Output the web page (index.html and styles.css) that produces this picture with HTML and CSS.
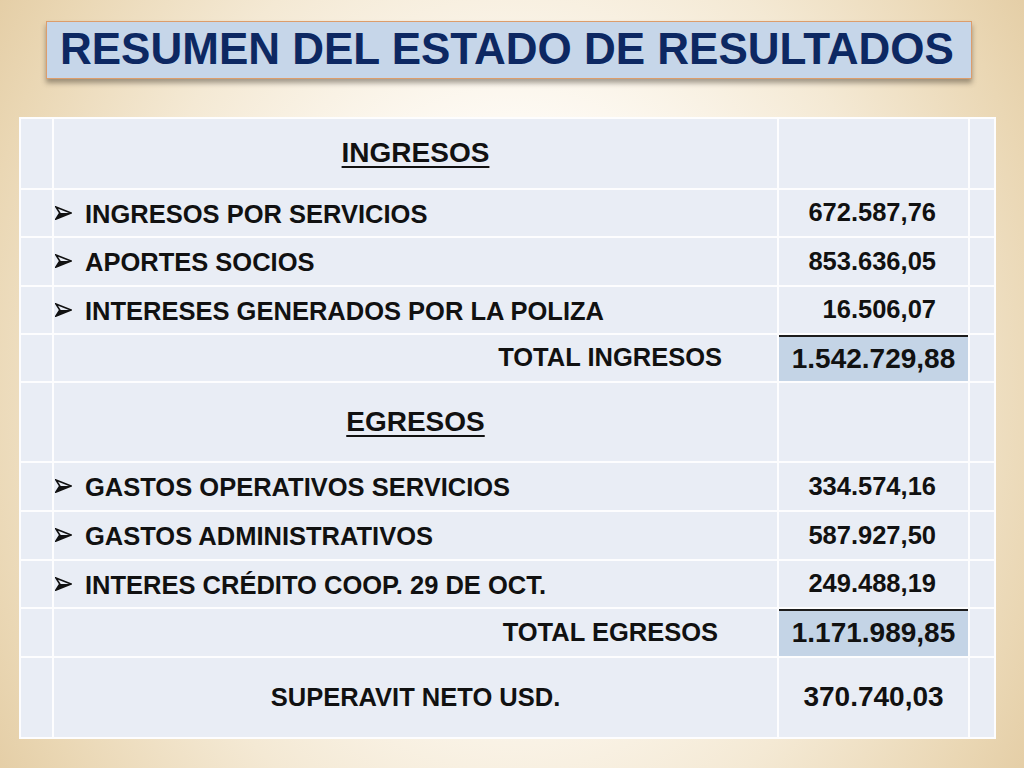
FILE: index.html
```html
<!DOCTYPE html>
<html lang="es">
<head>
<meta charset="utf-8">
<title>Resumen del Estado de Resultados</title>
<link rel="stylesheet" href="styles.css">
</head>
<body>
<main class="slide">
  <header class="title-box">
    <h1 class="title">RESUMEN DEL ESTADO DE RESULTADOS</h1>
  </header>

  <table class="summary">
    <colgroup>
      <col class="c-edge">
      <col class="c-label">
      <col class="c-value">
      <col class="c-tail">
    </colgroup>
    <tbody>
      <tr class="r-head">
        <td></td>
        <td class="section"><span class="section-text">INGRESOS</span></td>
        <td></td>
        <td></td>
      </tr>
      <tr class="r-item">
        <td></td>
        <td class="item"><svg class="bullet" viewBox="0 0 17 14" width="17" height="14" aria-hidden="true"><path d="M0.9 0.9 L16.1 7 L0.9 13.1 L4.8 7 Z" fill="none" stroke="#111" stroke-width="1.6" stroke-linejoin="miter"/><path d="M4.8 7 L16.1 7 L0.9 13.1 Z" fill="#111"/></svg><span>INGRESOS POR SERVICIOS</span></td>
        <td class="value">672.587,76</td>
        <td></td>
      </tr>
      <tr class="r-item2">
        <td></td>
        <td class="item"><svg class="bullet" viewBox="0 0 17 14" width="17" height="14" aria-hidden="true"><path d="M0.9 0.9 L16.1 7 L0.9 13.1 L4.8 7 Z" fill="none" stroke="#111" stroke-width="1.6" stroke-linejoin="miter"/><path d="M4.8 7 L16.1 7 L0.9 13.1 Z" fill="#111"/></svg><span>APORTES SOCIOS</span></td>
        <td class="value">853.636,05</td>
        <td></td>
      </tr>
      <tr class="r-item">
        <td></td>
        <td class="item"><svg class="bullet" viewBox="0 0 17 14" width="17" height="14" aria-hidden="true"><path d="M0.9 0.9 L16.1 7 L0.9 13.1 L4.8 7 Z" fill="none" stroke="#111" stroke-width="1.6" stroke-linejoin="miter"/><path d="M4.8 7 L16.1 7 L0.9 13.1 Z" fill="#111"/></svg><span>INTERESES GENERADOS POR LA POLIZA</span></td>
        <td class="value">16.506,07</td>
        <td></td>
      </tr>
      <tr class="r-total">
        <td></td>
        <td class="total-label">TOTAL INGRESOS</td>
        <td class="total-value">1.542.729,88</td>
        <td></td>
      </tr>
      <tr class="r-section">
        <td></td>
        <td class="section"><span class="section-text">EGRESOS</span></td>
        <td></td>
        <td></td>
      </tr>
      <tr class="r-item2">
        <td></td>
        <td class="item"><svg class="bullet" viewBox="0 0 17 14" width="17" height="14" aria-hidden="true"><path d="M0.9 0.9 L16.1 7 L0.9 13.1 L4.8 7 Z" fill="none" stroke="#111" stroke-width="1.6" stroke-linejoin="miter"/><path d="M4.8 7 L16.1 7 L0.9 13.1 Z" fill="#111"/></svg><span>GASTOS OPERATIVOS SERVICIOS</span></td>
        <td class="value">334.574,16</td>
        <td></td>
      </tr>
      <tr class="r-item2">
        <td></td>
        <td class="item"><svg class="bullet" viewBox="0 0 17 14" width="17" height="14" aria-hidden="true"><path d="M0.9 0.9 L16.1 7 L0.9 13.1 L4.8 7 Z" fill="none" stroke="#111" stroke-width="1.6" stroke-linejoin="miter"/><path d="M4.8 7 L16.1 7 L0.9 13.1 Z" fill="#111"/></svg><span>GASTOS ADMINISTRATIVOS</span></td>
        <td class="value">587.927,50</td>
        <td></td>
      </tr>
      <tr class="r-item">
        <td></td>
        <td class="item"><svg class="bullet" viewBox="0 0 17 14" width="17" height="14" aria-hidden="true"><path d="M0.9 0.9 L16.1 7 L0.9 13.1 L4.8 7 Z" fill="none" stroke="#111" stroke-width="1.6" stroke-linejoin="miter"/><path d="M4.8 7 L16.1 7 L0.9 13.1 Z" fill="#111"/></svg><span>INTERES CRÉDITO COOP. 29 DE OCT.</span></td>
        <td class="value">249.488,19</td>
        <td></td>
      </tr>
      <tr class="r-item2">
        <td></td>
        <td class="total-label total-label-eg">TOTAL EGRESOS</td>
        <td class="total-value">1.171.989,85</td>
        <td></td>
      </tr>
      <tr class="r-net">
        <td></td>
        <td class="net-label">SUPERAVIT NETO USD.</td>
        <td class="net-value">370.740,03</td>
        <td></td>
      </tr>
    </tbody>
  </table>
</main>
</body>
</html>
```

FILE: styles.css
```css
* {
  box-sizing: border-box;
}

html,
body {
  margin: 0;
  padding: 0;
}

body {
  width: 1024px;
  height: 768px;
  overflow: hidden;
  font-family: "Liberation Sans", Arial, sans-serif;
}

.slide {
  width: 1024px;
  height: 768px;
  padding-top: 21px;
  background: radial-gradient(ellipse 62% 100% at 50% 50%, #fffefb 0%, #fdf9f2 35%, #f4e9d4 62%, #ead7b4 85%, #e2caa0 100%);
  display: flex;
  flex-direction: column;
}

.title-box {
  margin-left: 46px;
  width: 926px;
  height: 58px;
  background: #c6d6e9;
  border: 1.5px solid #dc9d6c;
  box-shadow: 0 4px 5px rgba(60, 50, 40, 0.45);
  display: flex;
  align-items: center;
  padding-left: 13px;
  padding-bottom: 1px;
}

.title {
  margin: 0;
  font-size: 44px;
  font-weight: 700;
  line-height: 1.1;
  color: #0d2862;
  white-space: nowrap;
}

.summary {
  margin-top: 38px;
  margin-left: 19px;
  width: 977px;
  table-layout: fixed;
  border-collapse: separate;
  border-spacing: 2px;
  background: #fdfdfe;
  color: #111;
  font-weight: 700;
}

.c-edge { width: 31px; }
.c-label { width: 723px; }
.c-value { width: 189px; }
.c-tail { width: 24px; }

.summary td {
  background: #e9edf5;
  padding: 0;
  vertical-align: middle;
  white-space: nowrap;
  line-height: 1.15;
}

.r-head td { height: 69px; }
.r-item td { height: 46px; }
.r-item2 td { height: 47px; }
.r-total td { height: 46px; }
.r-section td { height: 78px; }
.r-net td { height: 79px; }

.section {
  text-align: center;
  font-size: 28px;
}

.section-text {
  text-decoration: underline;
  text-decoration-thickness: 2px;
  text-underline-offset: 4px;
}

.summary td.item {
  font-size: 25.5px;
  padding-left: 1px;
}

.item span {
  vertical-align: middle;
}

.bullet {
  display: inline-block;
  vertical-align: middle;
  margin-right: 13px;
  margin-top: -2px;
}

.summary td.value {
  font-size: 25.5px;
  text-align: right;
  padding-right: 32px;
}

.summary td.total-label {
  font-size: 25.5px;
  text-align: right;
  padding-right: 55px;
}

.summary td.total-label-eg {
  padding-right: 59px;
}

.summary td.total-value {
  font-size: 28px;
  text-align: center;
  background: #c4d4e6;
  border-top: 2px solid #1c1c1c;
}

.net-label {
  font-size: 25.5px;
  text-align: center;
}

.net-value {
  font-size: 28px;
  text-align: center;
}
```
